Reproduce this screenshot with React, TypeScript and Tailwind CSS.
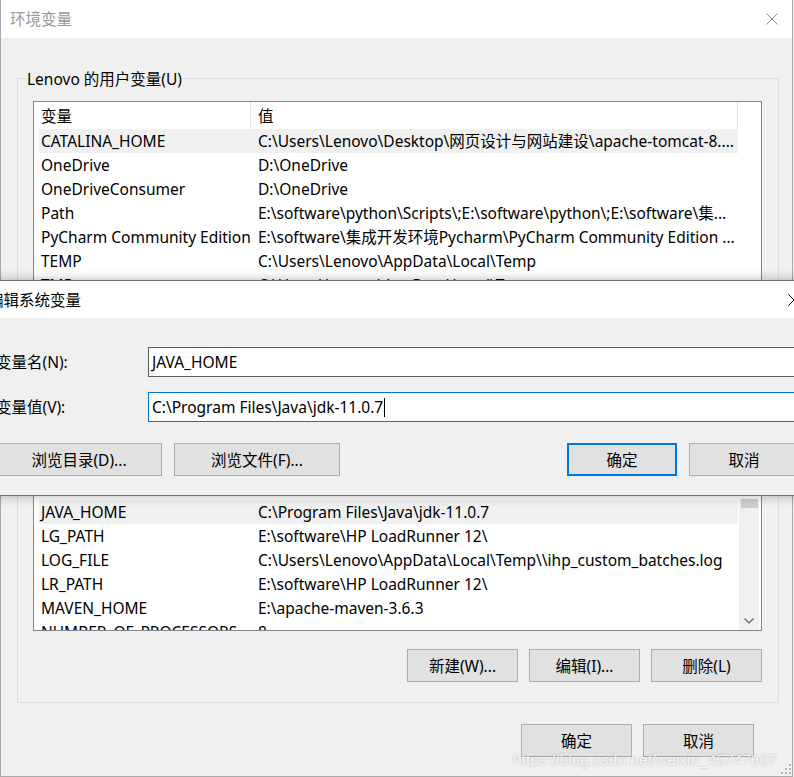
import React from "react";

type Row = { name: string; value: string; selected?: boolean };

const topRows: Row[] = [
  { name: "CATALINA_HOME", value: "C:\\Users\\Lenovo\\Desktop\\网页设计与网站建设\\apache-tomcat-8....", selected: true },
  { name: "OneDrive", value: "D:\\OneDrive" },
  { name: "OneDriveConsumer", value: "D:\\OneDrive" },
  { name: "Path", value: "E:\\software\\python\\Scripts\\;E:\\software\\python\\;E:\\software\\集..." },
  { name: "PyCharm Community Edition", value: "E:\\software\\集成开发环境Pycharm\\PyCharm Community Edition ..." },
  { name: "TEMP", value: "C:\\Users\\Lenovo\\AppData\\Local\\Temp" },
  { name: "TMP", value: "C:\\Users\\Lenovo\\AppData\\Local\\Temp" },
];

const bottomRows: Row[] = [
  { name: "JAVA_HOME", value: "C:\\Program Files\\Java\\jdk-11.0.7", selected: true },
  { name: "LG_PATH", value: "E:\\software\\HP LoadRunner 12\\" },
  { name: "LOG_FILE", value: "C:\\Users\\Lenovo\\AppData\\Local\\Temp\\\\ihp_custom_batches.log" },
  { name: "LR_PATH", value: "E:\\software\\HP LoadRunner 12\\" },
  { name: "MAVEN_HOME", value: "E:\\apache-maven-3.6.3" },
  { name: "NUMBER_OF_PROCESSORS", value: "8" },
];

function ListRow({ row }: { row: Row }) {
  return (
    <div
      className={`flex h-[24px] w-[699px] shrink-0 items-center whitespace-nowrap leading-[20px] ${
        row.selected ? "bg-[#f0f0f0]" : "bg-white"
      }`}
    >
      <div className="w-[212px] shrink-0 overflow-hidden pl-[2px]">{row.name}</div>
      <div className="flex-1 overflow-hidden pl-[7px]">{row.value}</div>
    </div>
  );
}

function CloseX({ color }: { color: string }) {
  return (
    <svg width="12" height="12" viewBox="0 0 12 12" className="shrink-0">
      <path d="M0.5 0.5 L11.5 11.5 M11.5 0.5 L0.5 11.5" stroke={color} strokeWidth="1" fill="none" />
    </svg>
  );
}

function WinButton({
  children,
  className = "",
  primary = false,
}: {
  children: React.ReactNode;
  className?: string;
  primary?: boolean;
}) {
  return (
    <div
      className={`flex h-[33px] shrink-0 items-center justify-center bg-[#e1e1e1] ${
        primary ? "border-2 border-[#0078d7]" : "border border-[#adadad]"
      } ${className}`}
    >
      {children}
    </div>
  );
}

export default function App() {
  return (
    <div className="relative h-[777px] w-[794px] overflow-hidden bg-[#f0f0f0] font-['Noto_Sans','Noto_Sans_CJK_SC',sans-serif] text-[15.5px] leading-[20px] text-black">
      {/* Main window: 环境变量 */}
      <div className="flex h-[777px] w-[793px] flex-col border-x border-b border-[#aaaaaa] bg-[#f0f0f0]">
        <div className="flex h-[38px] shrink-0 items-center justify-between bg-white pl-[9px] pr-[14px]">
          <span className="text-[#999999]">环境变量</span>
          <CloseX color="#8c8c8c" />
        </div>

        {/* Group box */}
        <div className="relative ml-[16px] mt-[40px] flex h-[625px] w-[762px] shrink-0 flex-col border border-[#dcdcdc]">
          <span className="absolute left-[8px] top-[-10px] bg-[#f0f0f0] px-[1px] leading-[20px]">
            Lenovo 的用户变量(U)
          </span>

          {/* List view */}
          <div className="ml-[15px] mt-[22px] flex h-[530px] w-[729px] shrink-0 flex-col overflow-hidden border border-[#828790] bg-white">
            <div className="flex h-[27px] shrink-0 items-center pl-[5px]">
              <div className="flex h-full w-[212px] items-center border-r border-[#e5e5e5] pl-[2px]">变量</div>
              <div className="flex h-full w-[487px] items-center border-r border-[#e5e5e5] pl-[7px]">值</div>
            </div>
            <div className="flex flex-col pl-[5px]">
              {topRows.map((r) => (
                <ListRow key={r.name} row={r} />
              ))}
            </div>
            <div className="flex-1" />
            <div className="flex h-[131px] shrink-0">
              <div className="flex flex-col overflow-hidden pl-[5px] pt-[1px]">
                {bottomRows.map((r) => (
                  <ListRow key={r.name} row={r} />
                ))}
              </div>
              <div className="ml-[1px] flex w-[20px] flex-col items-center justify-between bg-[#f0f0f0] pb-[6px]">
                <div className="h-[9px] w-[17px] bg-[#cdcdcd]" />
                <svg width="10" height="6" viewBox="0 0 10 6">
                  <path d="M0.5 0.5 L5 5 L9.5 0.5" stroke="#606060" strokeWidth="1.2" fill="none" />
                </svg>
              </div>
            </div>
          </div>

          <div className="mr-[16px] mt-[18px] flex justify-end gap-[11px]">
            <WinButton className="w-[111px]">新建(W)...</WinButton>
            <WinButton className="w-[111px]">编辑(I)...</WinButton>
            <WinButton className="w-[111px]">删除(L)</WinButton>
          </div>
        </div>

        <div className="mr-[38px] mt-[21px] flex justify-end gap-[11px]">
          <WinButton className="w-[111px]">确定</WinButton>
          <WinButton className="w-[111px]">取消</WinButton>
        </div>
      </div>

      {/* Edit system variable dialog (window overlapping) */}
      <div className="absolute left-[-40px] top-[280px] flex h-[216px] w-[880px] flex-col border border-[#6f6f6f] bg-[#f0f0f0] shadow-[0_0_10px_rgba(0,0,0,0.3)]">
        <div className="flex h-[37px] shrink-0 items-center justify-between bg-white pl-[27px] pr-[39px]">
          <span>编辑系统变量</span>
          <CloseX color="#111111" />
        </div>
        <div className="flex flex-col pl-[35px] pt-[29px]">
          <div className="flex items-center">
            <div className="w-[152px]">变量名(N):</div>
            <div className="flex h-[30px] w-[680px] items-center border border-[#5a5a5a] bg-white pl-[3px]">
              JAVA_HOME
            </div>
          </div>
          <div className="mt-[15px] flex items-center">
            <div className="w-[152px]">变量值(V):</div>
            <div className="flex h-[30px] w-[680px] items-center border border-[#0078d7] bg-white pl-[3px]">
              <span>C:\Program Files\Java\jdk-11.0.7</span>
              <span className="ml-[1px] h-[19px] w-[1px] bg-black" />
            </div>
          </div>
          <div className="mt-[21px] flex gap-[12px]">
            <WinButton className="w-[166px]">浏览目录(D)...</WinButton>
            <WinButton className="w-[166px]">浏览文件(F)...</WinButton>
            <WinButton primary className="ml-[215px] w-[110px]">确定</WinButton>
            <WinButton className="w-[110px]">取消</WinButton>
          </div>
        </div>
      </div>

      {/* Watermark */}
      <div className="pointer-events-none absolute left-[513px] top-[750px] whitespace-nowrap font-['Liberation_Sans',sans-serif] text-[15.5px] leading-[20px] text-white/85 [text-shadow:0_0_2px_rgba(0,0,0,0.3)]">
        https://blog.csdn.net/weixin_45747607
      </div>

      {/* Resize grip */}
      <svg className="absolute bottom-[3px] right-[3px]" width="10" height="10" viewBox="0 0 10 10">
        <rect x="8" y="0" width="2" height="2" fill="#b5b5b5" />
        <rect x="4" y="4" width="2" height="2" fill="#b5b5b5" />
        <rect x="8" y="4" width="2" height="2" fill="#b5b5b5" />
        <rect x="0" y="8" width="2" height="2" fill="#b5b5b5" />
        <rect x="4" y="8" width="2" height="2" fill="#b5b5b5" />
        <rect x="8" y="8" width="2" height="2" fill="#b5b5b5" />
      </svg>
    </div>
  );
}
